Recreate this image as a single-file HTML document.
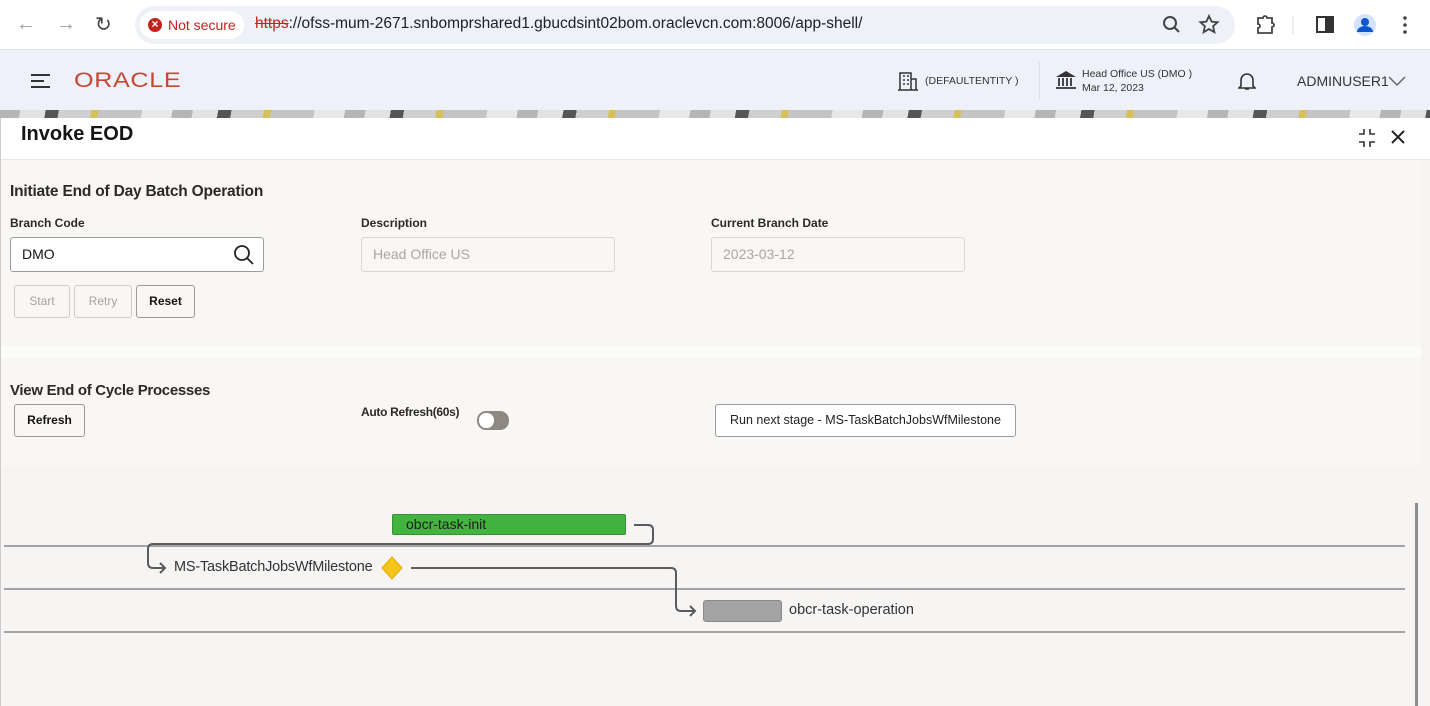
<!DOCTYPE html>
<html><head><meta charset="utf-8"><style>
*{box-sizing:border-box;margin:0;padding:0}
body{width:1430px;height:706px;overflow:hidden;font-family:"Liberation Sans",sans-serif;background:#f4f3f2;position:relative;color:#161513}
.abs{position:absolute}
.chrome{left:0;top:0;width:1430px;height:50px;background:#fff;border-bottom:1px solid #dfe1e5}
.pill{left:135px;top:6px;width:1100px;height:38px;border-radius:19px;background:#eef1f8}
.ns{left:140px;top:11px;width:104px;height:28px;border-radius:14px;background:#fff;font-size:14px;color:#c5221f;line-height:28px;padding-left:28px}
.ns:before{content:"×";position:absolute;left:8px;top:7px;width:14px;height:14px;border-radius:7px;background:#c5221f;color:#fff;font-size:12px;line-height:13px;text-align:center;font-weight:bold}
.url{left:255px;top:15px;font-size:16px;color:#202124}
.appbar{left:0;top:51px;width:1430px;height:59px;background:#eef1f9}
.strip{left:0;top:110px;width:1430px;height:8px;background:repeating-linear-gradient(100deg,#b5b5b5 0 20px,#e2e2e2 20px 45px,#555 45px 58px,#cfcfcf 58px 90px,#d9bf5a 90px 97px,#c4c4c4 97px 140px,#e8e8e8 140px 170px)}
.panel{left:0;top:118px;width:1430px;height:588px;background:#f6f5f4;border-left:1px solid #ccc}
.phead{left:1px;top:118px;width:1429px;height:42px;background:#fff;border-bottom:1px solid #e6e6e6}
.sec{background:#f8f7f5;left:1px;width:1420px}
.lbl{font-size:12px;font-weight:bold;color:#2b2a28}
.inp{height:35px;border:1px solid #d8d6d3;border-radius:3px;background:#f8f7f5;font-size:14px;color:#a9a7a4;line-height:33px;padding-left:11px}
.btn{height:33px;border:1px solid #9d9b98;border-radius:3px;background:#f8f7f5;font-size:12px;font-weight:bold;text-align:center;line-height:31px;color:#161513}
.dis{border-color:#cfcdca;color:#a5a3a0;font-weight:normal}
.hl{height:2px;background:#a3a3a3;left:4px;width:1401px}
</style></head><body>
<div class="abs chrome"></div>
<div class="abs" style="left:16px;top:13px;font-size:20px;color:#9aa0a6">←</div>
<div class="abs" style="left:56px;top:13px;font-size:20px;color:#9aa0a6">→</div>
<div class="abs" style="left:95px;top:12px;font-size:20px;color:#444">↻</div>
<div class="abs pill"></div>
<div class="abs ns">Not secure</div>
<div class="abs url" style="font-size:15.5px"><span style="color:#c5221f;text-decoration:line-through">https</span>://ofss-mum-2671.snbomprshared1.gbucdsint02bom.oraclevcn.com:8006/app-shell/</div>
<svg class="abs" style="left:1160px;top:14px" width="70" height="22"><circle cx="10" cy="9" r="6" fill="none" stroke="#444" stroke-width="2"/><path d="M14 13l5 5" stroke="#444" stroke-width="2"/><path d="M49 2l2.6 5.6 6 .6-4.5 4 1.3 6-5.4-3.1-5.4 3.1 1.3-6-4.5-4 6-.6z" fill="none" stroke="#444" stroke-width="1.8"/></svg>
<svg class="abs" style="left:1255px;top:13px" width="160" height="24"><path d="M3 5h5a2 2 0 014 0h5v5a2 2 0 010 4v6H3v-5a2 2 0 000-4z" fill="none" stroke="#444" stroke-width="1.8"/><path d="M38 3v18" stroke="#ddd"/><rect x="62" y="4" width="16" height="15" fill="none" stroke="#333" stroke-width="2"/><rect x="70" y="4" width="8" height="15" fill="#333"/><circle cx="110" cy="12" r="11" fill="#d3e3fd"/><circle cx="110" cy="9" r="4" fill="#0b57d0"/><path d="M102 19a8 6 0 0116 0z" fill="#0b57d0"/><circle cx="150" cy="5" r="1.8" fill="#444"/><circle cx="150" cy="12" r="1.8" fill="#444"/><circle cx="150" cy="19" r="1.8" fill="#444"/></svg>

<div class="abs appbar"></div>
<svg class="abs" style="left:30px;top:73px" width="22" height="16"><path d="M1 2h19M1 8h13M1 14h19" stroke="#333" stroke-width="2"/></svg>
<div class="abs" style="left:74px;top:69px;font-size:21px;color:#c74634;letter-spacing:0.5px;transform:scaleX(1.2);transform-origin:left">ORACLE</div>
<svg class="abs" style="left:898px;top:71px" width="20" height="20"><path d="M2 19V2h11v17M13 8h5v11M0 19h20" fill="none" stroke="#333" stroke-width="1.5"/><path d="M5 5h2M9 5h2M5 9h2M9 9h2M5 13h2M9 13h2" stroke="#333" stroke-width="1.5"/></svg>
<div class="abs" style="left:925px;top:75px;font-size:10.5px;color:#333">(DEFAULTENTITY )</div>
<div class="abs" style="left:1039px;top:62px;width:1px;height:38px;background:#dcdfe8"></div>
<svg class="abs" style="left:1055px;top:70px" width="22" height="20"><path d="M1 7L11 1l10 6z" fill="#333"/><path d="M4 8v8M8 8v8M12 8v8M16 8v8M1 18h20" stroke="#333" stroke-width="1.8"/></svg>
<div class="abs" style="left:1082px;top:67px;font-size:10.5px;color:#333;line-height:14px">Head Office US (DMO )<br>Mar 12, 2023</div>
<svg class="abs" style="left:1238px;top:71px" width="18" height="20"><path d="M3 15V9a6 6 0 0112 0v6l2 2H1z M7 18h4" fill="none" stroke="#333" stroke-width="1.6"/></svg>
<div class="abs" style="left:1297px;top:73px;font-size:14px;color:#333">ADMINUSER1</div>
<svg class="abs" style="left:1388px;top:75px" width="18" height="12"><path d="M1 2l8 8 8-8" fill="none" stroke="#666" stroke-width="1.5"/></svg>
<div class="abs strip"></div>

<div class="abs panel"></div>
<div class="abs phead"></div>
<div class="abs" style="left:21px;top:123px;font-size:20px;font-weight:bold">Invoke EOD</div>
<svg class="abs" style="left:1356px;top:127px" width="54" height="22"><path d="M3 7h5V2M14 2v5h5M3 15h5v5M14 20v-5h5" fill="none" stroke="#333" stroke-width="1.6"/><path d="M36 4l12 12M48 4L36 16" stroke="#222" stroke-width="2"/></svg>

<div class="abs sec" style="top:161px;height:185px"></div>
<div class="abs" style="left:1px;top:346px;width:1420px;height:12px;background:#fbfbfa"></div>
<div class="abs sec" style="top:358px;height:109px"></div>

<div class="abs" style="left:10px;top:183px;font-size:15.5px;font-weight:bold;color:#2b2a28;letter-spacing:-0.2px">Initiate End of Day Batch Operation</div>
<div class="abs lbl" style="left:10px;top:216px">Branch Code</div>
<div class="abs lbl" style="left:361px;top:216px">Description</div>
<div class="abs lbl" style="left:711px;top:216px">Current Branch Date</div>
<div class="abs inp" style="left:10px;top:237px;width:254px;border-color:#9d9b98;background:#fff;color:#161513">DMO</div>
<svg class="abs" style="left:233px;top:244px" width="22" height="22"><circle cx="9" cy="9" r="7" fill="none" stroke="#222" stroke-width="1.8"/><path d="M14 14l6 6" stroke="#222" stroke-width="1.8"/></svg>
<div class="abs inp" style="left:361px;top:237px;width:254px">Head Office US</div>
<div class="abs inp" style="left:711px;top:237px;width:254px">2023-03-12</div>
<div class="abs btn dis" style="left:14px;top:285px;width:56px">Start</div>
<div class="abs btn dis" style="left:74px;top:285px;width:58px">Retry</div>
<div class="abs btn" style="left:136px;top:285px;width:59px">Reset</div>

<div class="abs" style="left:10px;top:382px;font-size:15px;font-weight:bold;color:#2b2a28;letter-spacing:-0.3px">View End of Cycle Processes</div>
<div class="abs btn" style="left:14px;top:404px;width:71px;height:33px">Refresh</div>
<div class="abs lbl" style="left:361px;top:405px;letter-spacing:-0.3px">Auto Refresh(60s)</div>
<div class="abs" style="left:477px;top:411px;width:32px;height:19px;border-radius:9px;background:#8e8882"></div>
<div class="abs" style="left:479px;top:413px;width:15px;height:15px;border-radius:7px;background:#fff"></div>
<div class="abs btn" style="left:715px;top:404px;width:301px;height:33px;border-color:#9d9b98;background:#fff;font-weight:normal;font-size:12.5px;color:#222">Run next stage - MS-TaskBatchJobsWfMilestone</div>

<div class="abs hl" style="top:545px"></div>
<div class="abs hl" style="top:588px"></div>
<div class="abs hl" style="top:631px"></div>
<div class="abs" style="left:1415px;top:503px;width:3px;height:203px;background:#8d8d8d"></div>

<div class="abs" style="left:392px;top:514px;width:234px;height:21px;background:#43b33f;border:1px solid #3a8f36;border-radius:2px;font-size:14px;color:#1d1d1d;line-height:19px;padding-left:13px">obcr-task-init</div>
<svg class="abs" style="left:0;top:500px" width="1000" height="140"><g fill="none" stroke="#5b5b5b" stroke-width="2"><path d="M634 25h14q5 0 5 5v9q0 5-5 5H153q-5 0-5 5v14q0 5 5 5h12M160 63l5 5-5 5"/><path d="M411 68h260q5 0 5 5v33q0 5 5 5h14M690 106l5 5-5 5"/></g><path d="M392 57l10 11-10 11-10-11z" fill="#f5c518" stroke="#e0ad00"/></svg>
<div class="abs" style="left:174px;top:559px;font-size:14.5px;color:#333;letter-spacing:-0.2px">MS-TaskBatchJobsWfMilestone</div>
<div class="abs" style="left:703px;top:600px;width:79px;height:22px;background:#a3a3a3;border:1px solid #8a8a8a;border-radius:3px"></div>
<div class="abs" style="left:789px;top:602px;font-size:14.5px;color:#333">obcr-task-operation</div>
</body></html>
